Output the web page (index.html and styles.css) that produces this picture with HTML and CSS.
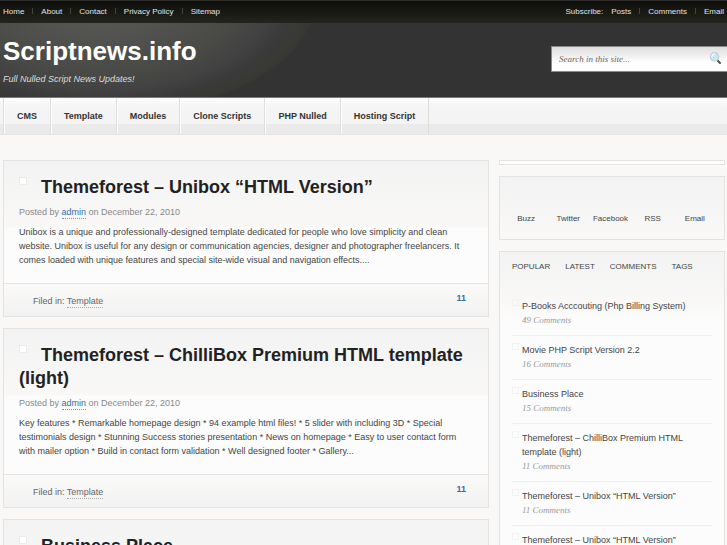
FILE: index.html
```html
<!DOCTYPE html>
<html lang="en">
<head>
<meta charset="utf-8">
<title>Scriptnews.info</title>
<link rel="stylesheet" href="styles.css">
</head>
<body>
<div class="topbar">
  <nav aria-label="Pages">
    <ul class="links">
      <li><a href="#">Home</a></li>
      <li><a href="#">About</a></li>
      <li><a href="#">Contact</a></li>
      <li><a href="#">Privacy Policy</a></li>
      <li><a href="#">Sitemap</a></li>
    </ul>
  </nav>
  <div class="subscribe">
    <span>Subscribe:</span>
    <ul class="links">
      <li><a href="#">Posts</a></li>
      <li><a href="#">Comments</a></li>
      <li><a href="#">Email</a></li>
    </ul>
  </div>
</div>
<header class="header">
  <div>
    <h1 class="site-title"><a href="#">Scriptnews.info</a></h1>
    <p class="tagline">Full Nulled Script News Updates!</p>
  </div>
  <form class="search">
    <input type="text" aria-label="Search in this site" placeholder="Search in this site...">
    <button type="submit" aria-label="Search">
      <svg width="13" height="13" viewBox="0 0 13 13" aria-hidden="true">
        <path d="M8.8 8.8 11 11" stroke="#55524e" stroke-width="2" stroke-linecap="round"/>
        <circle cx="5.5" cy="4.8" r="4.2" fill="#c9e8f5" stroke="#c3ced5" stroke-width="1.2"/>
        <path d="M3 4.5a2.6 2.6 0 0 1 2.8-2.3" fill="none" stroke="#f4fcff" stroke-width="1.4"/>
      </svg>
    </button>
  </form>
</header>
<nav class="categories" aria-label="Categories">
  <a href="#">CMS</a>
  <a href="#">Template</a>
  <a href="#">Modules</a>
  <a href="#">Clone Scripts</a>
  <a href="#">PHP Nulled</a>
  <a href="#">Hosting Script</a>
</nav>
<div class="page">
  <main class="stack">
    <article class="post">
      <div class="post-body">
        <h2><span class="thumb"></span><a href="#">Themeforest – Unibox “HTML Version”</a></h2>
        <p class="meta">Posted by <a href="#">admin</a> on December 22, 2010</p>
        <p class="excerpt">Unibox is a unique and professionally-designed template dedicated for people who love simplicity and clean website. Unibox is useful for any design or communication agencies, designer and photographer freelancers. It comes loaded with unique features and special site-wide visual and navigation effects....</p>
      </div>
      <footer class="post-foot">
        <span>Filed in: <a href="#">Template</a></span>
        <a class="count" href="#">11</a>
      </footer>
    </article>
    <article class="post">
      <div class="post-body">
        <h2><span class="thumb"></span><a href="#">Themeforest – ChilliBox Premium HTML template (light)</a></h2>
        <p class="meta">Posted by <a href="#">admin</a> on December 22, 2010</p>
        <p class="excerpt">Key features * Remarkable homepage design * 94 example html files! * 5 slider with including 3D * Special testimonials design * Stunning Success stories presentation * News on homepage * Easy to user contact form with mailer option * Build in contact form validation * Well designed footer * Gallery...</p>
      </div>
      <footer class="post-foot">
        <span>Filed in: <a href="#">Template</a></span>
        <a class="count" href="#">11</a>
      </footer>
    </article>
    <article class="post">
      <div class="post-body">
        <h2><span class="thumb"></span><a href="#">Business Place</a></h2>
      </div>
    </article>
  </main>
  <aside class="stack">
    <div class="box box-empty"></div>
    <ul class="box social">
      <li><a href="#">Buzz</a></li>
      <li><a href="#">Twitter</a></li>
      <li><a href="#">Facebook</a></li>
      <li><a href="#">RSS</a></li>
      <li><a href="#">Email</a></li>
    </ul>
    <section class="box">
      <div class="tabs">
        <button type="button">POPULAR</button>
        <button type="button">LATEST</button>
        <button type="button">COMMENTS</button>
        <button type="button">TAGS</button>
      </div>
      <ul class="popular">
        <li><a href="#">P-Books Acccouting (Php Billing System)</a><em>49 Comments</em></li>
        <li><a href="#">Movie PHP Script Version 2.2</a><em>16 Comments</em></li>
        <li><a href="#">Business Place</a><em>15 Comments</em></li>
        <li><a href="#">Themeforest – ChilliBox Premium HTML template (light)</a><em>11 Comments</em></li>
        <li><a href="#">Themeforest – Unibox “HTML Version”</a><em>11 Comments</em></li>
        <li><a href="#">Themeforest – Unibox “HTML Version”</a></li>
      </ul>
    </section>
  </aside>
</div>
</body>
</html>
```
FILE: styles.css
```css
* { box-sizing: border-box; }
body {
  margin: 0;
  height: 100vh;
  overflow: hidden;
  background: #f9f8f7;
  color: #444;
  font: 9px/14px "Liberation Sans", Arial, sans-serif;
}
h1, h2, p, ul { margin: 0; padding: 0; }
ul { list-style: none; }
a { color: inherit; text-decoration: none; }
button { border: 0; padding: 0; background: none; color: inherit; font: inherit; }

.topbar {
  display: flex;
  justify-content: space-between;
  align-items: center;
  height: 23px;
  padding: 0 3px;
  border-top: 1px solid #2c2c2a;
  background: linear-gradient(#0e0e0b, #24241d);
  color: #e2e2e2;
  font-size: 8px;
}
.subscribe, .links { display: flex; }
.subscribe { gap: 8px; }
.links li + li::before {
  content: "";
  display: inline-block;
  height: 6px;
  margin: 0 8px;
  border-left: 1px solid #44443f;
}

.header {
  display: flex;
  justify-content: space-between;
  height: 75px;
  padding-left: 3px;
  border-bottom: 1px solid #777;
  background: #333 radial-gradient(ellipse 215px 112px at 100px -20px, #555553 20%, #4a4a47 60%, #424242 78%, #3a3a3a 88%, #383833 98%, #333 100%);
}
.site-title {
  padding-top: 12px;
  color: #fff;
  font-size: 26px;
  line-height: 32px;
}
.tagline { padding-top: 5px; color: #ddd; font-style: italic; }
.search {
  display: flex;
  align-items: center;
  width: 176px;
  height: 26px;
  margin-top: 23px;
  padding: 0 5px 0 7px;
  border: 1px solid #8a8a8a;
  border-right: 0;
  background: linear-gradient(#dedede, #f4f4f4 45%, #fdfdfd 60%);
}
.search input {
  flex: 1;
  min-width: 0;
  padding: 0;
  border: 0;
  outline: 0;
  background: none;
  color: #666;
  font: italic 9px/14px "Liberation Serif", "Times New Roman", serif;
}
.search input::placeholder { color: #666; opacity: 1; }
.search button { display: flex; padding-bottom: 2px; }

.categories {
  display: flex;
  height: 37px;
  padding-left: 3px;
  border-bottom: 1px solid #e6e6e6;
  background: linear-gradient(#fcfcfc, #f4f4f4 30%, #f4f4f4 72%, #eaeaea 72%);
  color: #333;
  font-weight: bold;
}
.categories::before {
  content: "";
  border-left: 1px solid #ddd;
}
.categories a {
  padding: 11px 13px 0 12px;
  border-right: 1px solid #ddd;
  border-left: 1px solid #fff;
}

.page {
  display: grid;
  grid-template-columns: minmax(0, 43fr) minmax(0, 20fr);
  align-items: start;
  gap: 10px;
  padding: 25px 2px 0 3px;
}
.stack { display: grid; gap: 11px; }

.post, .box { border: 1px solid #e3e3e3; }
.post { background: #fcfcfc; }
.post-body {
  padding: 15px 15px 16px;
  background: linear-gradient(#f3f3f3, #f9f8f7 66px, #fcfcfc 67px);
}
.post h2 {
  color: #222;
  font-size: 18px;
  line-height: 23px;
}
.thumb {
  display: inline-block;
  width: 8px;
  height: 8px;
  margin-right: 14px;
  border: 1px solid #ebebeb;
  background: #fff;
  vertical-align: 8px;
}
.meta { margin: 6px 0; color: #888; }
.meta a { padding-bottom: 1px; border-bottom: 1px dotted #6f9ccb; color: #3a6ea5; }
.post-foot {
  display: flex;
  justify-content: space-between;
  height: 33px;
  padding: 10px 22px 0 29px;
  border-top: 1px solid #e3e3e3;
  background: linear-gradient(#fbfaf9, #f2f2f2);
  color: #666;
}
.post-foot span a { padding-bottom: 1px; border-bottom: 1px dotted #aaa; }
.post-foot .count { color: #3a6ea5; font-weight: bold; line-height: 8px; }

.box { background: linear-gradient(#f3f3f3, #f9f8f7 50px, #fcfcfc 70px); }
.box-empty { height: 5px; background: #fff; }
.social {
  display: grid;
  grid-template-columns: repeat(5, minmax(0, 1fr));
  padding: 35px 8px 13px 5px;
  background: linear-gradient(#f3f3f3, #f9f8f7);
  font-size: 8px;
  text-align: center;
}
.tabs {
  display: flex;
  gap: 15px;
  padding: 8px 12px 18px;
  font-size: 8px;
  line-height: 14px;
}
.popular { padding: 0 12px; }
.popular li {
  position: relative;
  padding: 7px 10px;
  border-bottom: 1px solid #f0f0f0;
}
.popular li::before {
  content: "";
  position: absolute;
  top: 7px;
  left: 0;
  width: 5px;
  height: 5px;
  border: 1px solid #f2f2f2;
}
.popular a { display: block; }
.popular em {
  display: block;
  color: #999;
  font: italic 9px/15px "Liberation Serif", "Times New Roman", serif;
}
```
